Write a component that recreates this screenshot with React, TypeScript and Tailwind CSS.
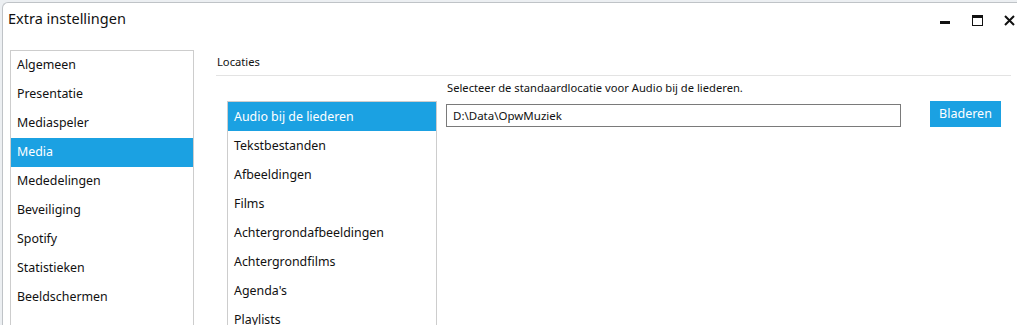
import { useState } from "react";

const SECTIONS = [
  "Algemeen",
  "Presentatie",
  "Mediaspeler",
  "Media",
  "Mededelingen",
  "Beveiliging",
  "Spotify",
  "Statistieken",
  "Beeldschermen",
];

const LOCATIONS = [
  "Audio bij de liederen",
  "Tekstbestanden",
  "Afbeeldingen",
  "Films",
  "Achtergrondafbeeldingen",
  "Achtergrondfilms",
  "Agenda's",
  "Playlists",
];

function WindowControls() {
  return (
    <div className="flex items-start gap-[21px] pr-[2px] pt-[11px]">
      <button className="flex h-[12px] w-[11px] items-center justify-center" aria-label="Minimaliseren">
        <svg width="11" height="12" viewBox="0 0 11 12">
          <rect x="0" y="7" width="10" height="3" fill="#111" />
        </svg>
      </button>
      <button className="flex h-[12px] w-[11px] items-center justify-center" aria-label="Maximaliseren">
        <svg width="11" height="11" viewBox="0 0 11 11">
          <rect x="0.5" y="0.5" width="10" height="10" fill="none" stroke="#111" strokeWidth="1" />
          <rect x="0" y="0" width="11" height="3" fill="#111" />
        </svg>
      </button>
      <button className="flex h-[12px] w-[11px] items-center justify-center" aria-label="Sluiten">
        <svg width="11" height="11" viewBox="0 0 11 11">
          <path d="M1 1 L10 10 M10 1 L1 10" stroke="#111" strokeWidth="2" />
        </svg>
      </button>
    </div>
  );
}

function ListBox({
  items,
  selected,
  onSelect,
  className,
  textClass,
}: {
  items: string[];
  selected: string;
  onSelect: (s: string) => void;
  className: string;
  textClass: string;
}) {
  return (
    <ul className={`border border-[#cdcdcd] bg-white ${className}`}>
      {items.map((item) => (
        <li
          key={item}
          onClick={() => onSelect(item)}
          className={`flex h-[29px] cursor-default items-center ${textClass} ${
            item === selected ? "bg-[#1ba1e2] text-white" : "text-[#111]"
          }`}
        >
          {item}
        </li>
      ))}
    </ul>
  );
}

export default function App() {
  const [section, setSection] = useState("Media");
  const [location, setLocation] = useState("Audio bij de liederen");

  return (
    <main className="h-[325px] w-[1017px] overflow-hidden bg-[#eceff2] pl-[2px] pt-[2px] font-['Noto_Sans','Open_Sans',sans-serif]">
      <div className="flex h-full flex-col rounded-tl-[6px] border-l border-t border-[#bfc3c7] bg-white">
        <header className="flex h-[33px] shrink-0 items-start justify-between">
          <h1 className="pl-[5px] pt-[5px] text-[14.5px] leading-[20px] text-[#111]">Extra instellingen</h1>
          <WindowControls />
        </header>

        <div className="flex min-h-0 flex-1 pl-[7px] pt-[14px]">
          <ListBox
            items={SECTIONS}
            selected={section}
            onSelect={setSection}
            className="h-[300px] w-[184px] shrink-0"
            textClass="pl-[6px] text-[12.4px]"
          />

          <section className="ml-[22px] flex flex-1 flex-col pr-[6px]">
            <h2 className="border-b border-[#e3e3e3] pb-[5px] pl-[1px] pt-[4px] text-[11.2px] leading-[16px] text-[#111]">
              Locaties
            </h2>

            <div className="flex items-start">
              <ListBox
                items={LOCATIONS}
                selected={location}
                onSelect={setLocation}
                className="ml-[11px] mt-[25px] w-[210px] shrink-0"
                textClass="pl-[6px] pt-[1px] text-[12.4px]"
              />

              <div className="ml-[9px] flex flex-1 flex-col pt-[4px]">
                <p className="pl-[1px] text-[11.2px] leading-[16px] text-[#111]">
                  Selecteer de standaardlocatie voor Audio bij de liederen.
                </p>
                <div className="mt-[5px] flex items-start">
                  <input
                    readOnly
                    value="D:\Data\OpwMuziek"
                    className="mt-[3px] h-[23px] w-[455px] border border-[#7a7a7a] px-[6px] text-[11.5px] text-[#111] outline-none"
                  />
                  <button className="ml-[29px] h-[26px] w-[71px] bg-[#1ba1e2] text-[12.5px] text-white">
                    Bladeren
                  </button>
                </div>
              </div>
            </div>
          </section>
        </div>
      </div>
    </main>
  );
}
